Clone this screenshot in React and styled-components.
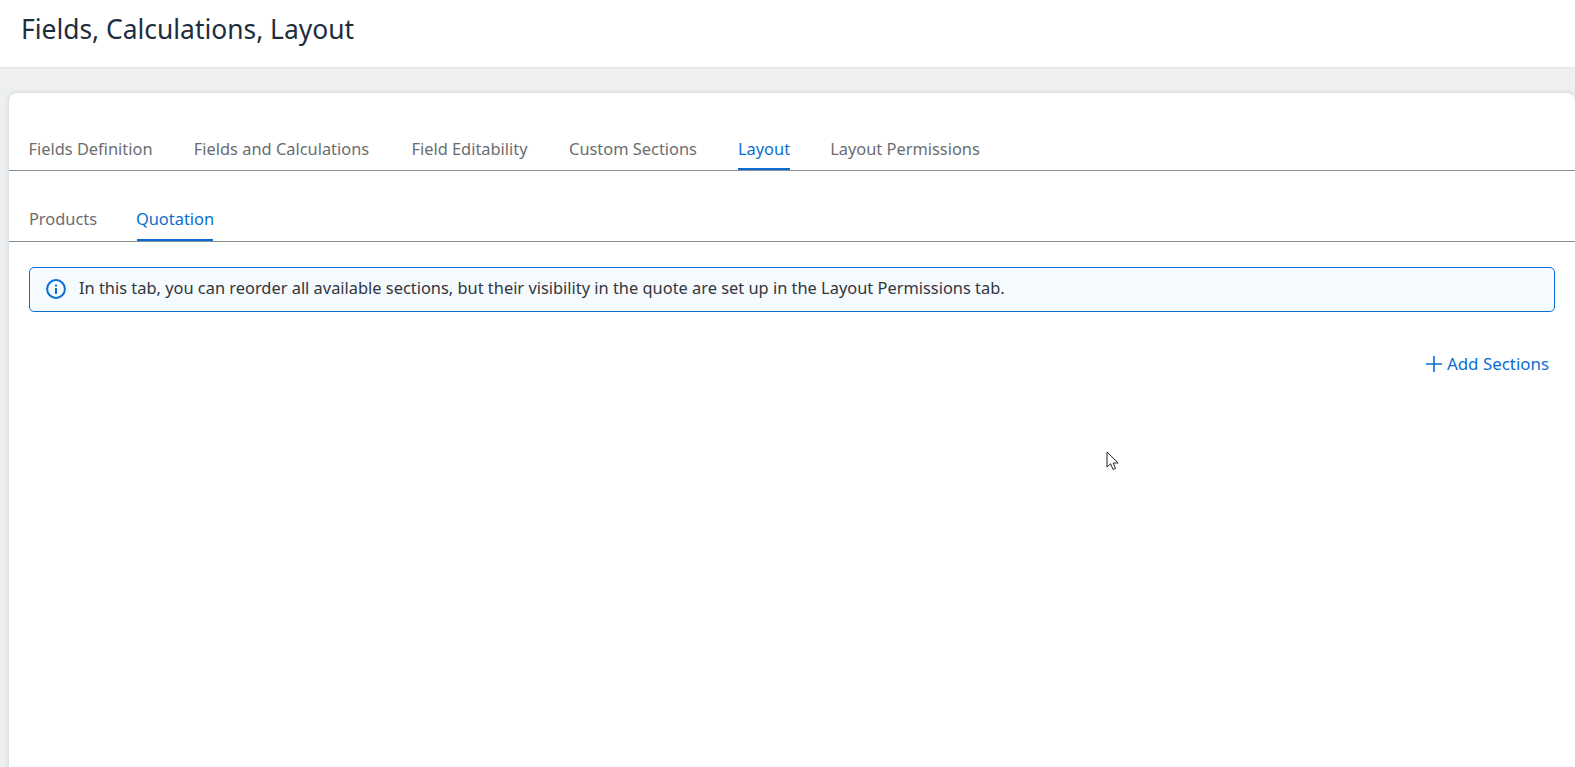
import React from "react";
import styled, { createGlobalStyle } from "styled-components";

const GlobalStyle = createGlobalStyle`
  html, body {
    margin: 0;
    height: 100%;
    overflow: hidden;
    background: #edeff0;
    font-family: "Noto Sans", "Open Sans", sans-serif;
  }
`;

const Page = styled.div`
  height: 767px;
  display: flex;
  flex-direction: column;
  position: relative;
  overflow: hidden;
`;

const Header = styled.header`
  height: 67px;
  box-sizing: border-box;
  padding: 11px 21px 0;
  background: #fff;
  box-shadow: 0 1px 2px rgba(34, 53, 72, 0.06);
`;

const Title = styled.h1`
  margin: 0;
  font-size: 26.4px;
  line-height: 36px;
  font-weight: 400;
  color: #1d2d3e;
`;

const Card = styled.main`
  flex: 1;
  margin: 26px 0 0 9px;
  background: #fff;
  border-radius: 8px 8px 0 0;
  box-shadow: 0 0 4px rgba(34, 53, 72, 0.18);
`;

const TabBar = styled.nav`
  display: flex;
  gap: 40px;
  height: ${(p) => p.$height}px;
  box-sizing: border-box;
  padding: 0 20px;
  border-bottom: 1px solid #868e99;
`;

const Tab = styled.a`
  display: flex;
  align-items: flex-end;
  justify-content: center;
  width: ${(p) => p.$width}px;
  height: 100%;
  box-sizing: border-box;
  padding-bottom: ${(p) => p.$lift}px;
  font-size: 16.4px;
  line-height: 22px;
  white-space: nowrap;
  color: ${(p) => (p.$active ? "#0a6ed1" : "#6a6d70")};
  box-shadow: ${(p) => (p.$active ? "inset 0 -2px 0 #0a6ed1" : "none")};
  margin-bottom: -1px;
`;

const Content = styled.section`
  padding: 25px 20px 0;
`;

const Alert = styled.div`
  display: flex;
  align-items: center;
  gap: 13px;
  height: 45px;
  box-sizing: border-box;
  padding: 0 16px 4px;
  background: #f5faff;
  border: 1px solid #0a6ed1;
  border-radius: 5px;
  font-size: 16.4px;
  color: #32363a;
`;

const InfoGlyph = styled.svg`
  margin-top: 2px;
`;

const Actions = styled.div`
  display: flex;
  justify-content: flex-end;
  padding: 41px 6px 0 0;
`;

const AddButton = styled.button`
  display: flex;
  align-items: center;
  gap: 5px;
  padding: 0;
  border: 0;
  background: none;
  font: inherit;
  font-size: 16.9px;
  line-height: 22px;
  color: #0a6ed1;
`;

const Pointer = styled.svg`
  position: absolute;
  left: 1106px;
  top: 451px;
`;

const InfoIcon = () => (
  <InfoGlyph width="20" height="20" viewBox="0 0 20 20" fill="none">
    <circle cx="10" cy="10" r="8.9" stroke="#0a6ed1" strokeWidth="2" />
    <rect x="9" y="9" width="2" height="6" fill="#0a6ed1" />
    <rect x="9" y="5.5" width="2" height="2" fill="#0a6ed1" />
  </InfoGlyph>
);

const PlusIcon = () => (
  <svg width="16" height="16" viewBox="0 0 16 16">
    <path d="M8 0v16M0 8h16" stroke="#0a6ed1" strokeWidth="1.6" fill="none" />
  </svg>
);

const mainTabs = [
  { label: "Fields Definition", width: 123 },
  { label: "Fields and Calculations", width: 179 },
  { label: "Field Editability", width: 117 },
  { label: "Custom Sections", width: 130 },
  { label: "Layout", width: 52 },
  { label: "Layout Permissions", width: 150 },
];
const subTabs = [
  { label: "Products", width: 68 },
  { label: "Quotation", width: 76 },
];

export default function App() {
  return (
    <>
      <GlobalStyle />
      <Page>
        <Header>
          <Title>Fields, Calculations, Layout</Title>
        </Header>
        <Card>
          <TabBar $height={78}>
            {mainTabs.map((t) => (
              <Tab key={t.label} $width={t.width} $lift={10} $active={t.label === "Layout"}>{t.label}</Tab>
            ))}
          </TabBar>
          <TabBar $height={71}>
            {subTabs.map((t) => (
              <Tab key={t.label} $width={t.width} $lift={11} $active={t.label === "Quotation"}>{t.label}</Tab>
            ))}
          </TabBar>
          <Content>
            <Alert>
              <InfoIcon />
              In this tab, you can reorder all available sections, but their visibility in the quote are set up in the Layout Permissions tab.
            </Alert>
            <Actions>
              <AddButton>
                <PlusIcon />
                Add Sections
              </AddButton>
            </Actions>
          </Content>
        </Card>
        <Pointer width="14" height="21" viewBox="0 0 14 21">
          <path d="M1 1v15l3.6-3.2 2.4 5.6 2.6-1-2.4-5.4h5z" fill="#fff" stroke="#222" strokeWidth="1" />
        </Pointer>
      </Page>
    </>
  );
}
